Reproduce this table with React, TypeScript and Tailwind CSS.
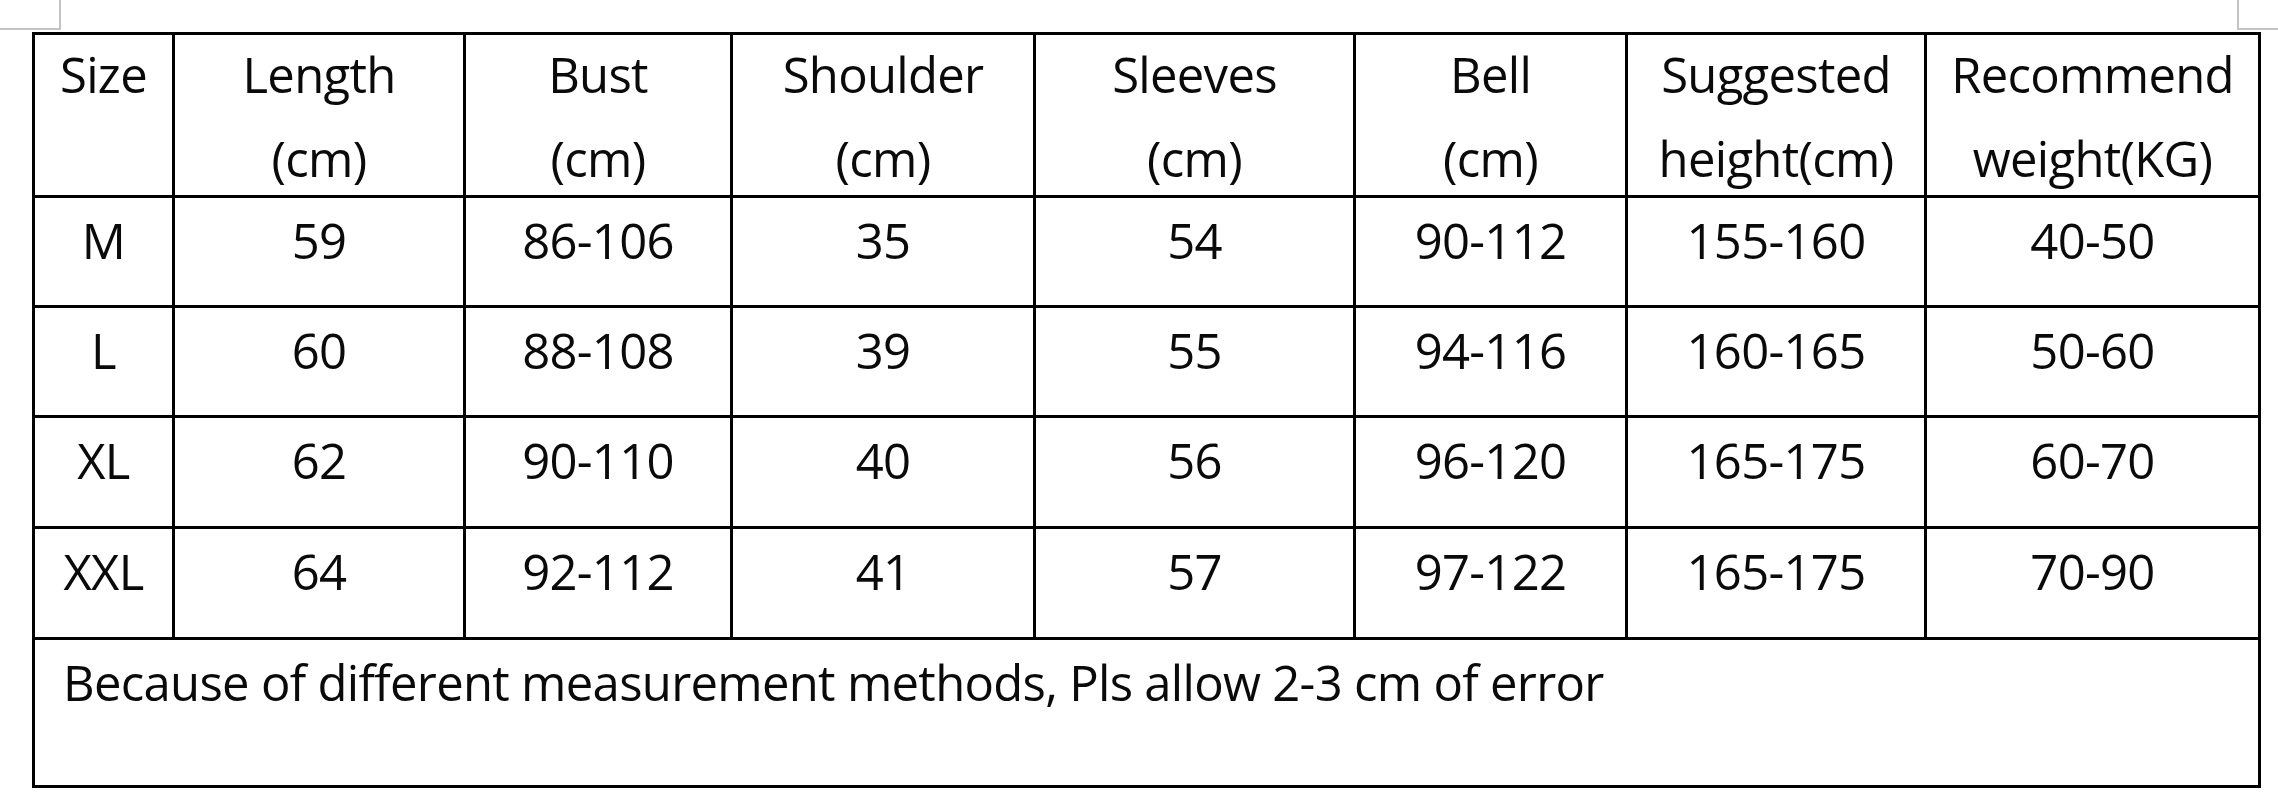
const headers: string[][] = [
  ['Size'],
  ['Length', '(cm)'],
  ['Bust', '(cm)'],
  ['Shoulder', '(cm)'],
  ['Sleeves', '(cm)'],
  ['Bell', '(cm)'],
  ['Suggested', 'height(cm)'],
  ['Recommend', 'weight(KG)'],
]

const rows: string[][] = [
  ['M', '59', '86-106', '35', '54', '90-112', '155-160', '40-50'],
  ['L', '60', '88-108', '39', '55', '94-116', '160-165', '50-60'],
  ['XL', '62', '90-110', '40', '56', '96-120', '165-175', '60-70'],
  ['XXL', '64', '92-112', '41', '57', '97-122', '165-175', '70-90'],
]

export default function App() {
  return (
    <div
      className="relative w-[2278px] h-[800px] bg-white text-[#0a0a0a] overflow-hidden"
      style={{ fontFamily: '"Open Sans", "Noto Sans", sans-serif' }}
    >
      {/* page margin marks */}
      <div className="absolute left-0 top-0 w-[61px] h-[30px] border-r-2 border-b-2 border-[#c4c4c4]" />
      <div className="absolute right-0 top-0 w-[41px] h-[30px] border-l-2 border-b-2 border-[#c4c4c4]" />

      <div className="pt-[32px] pl-[32px]">
        <div className="inline-grid grid-cols-[137px_288px_264px_300px_317px_269px_296px_331px] grid-rows-[160px_107px_107px_108px_108px_145px] gap-[3px] p-[3px] bg-black text-[49px] leading-[84px] tracking-[-0.7px]">
          {headers.map((h, i) => (
            <div key={i} className="bg-white flex flex-col items-center">
              <div className="-mt-[3px] flex flex-col items-center">
                {h.map((line, j) => (
                  <span key={j} className="whitespace-nowrap">{line}</span>
                ))}
              </div>
            </div>
          ))}
          {rows.map((r, i) =>
            r.map((cell, j) => (
              <div key={`${i}-${j}`} className="bg-white text-center whitespace-nowrap">
                {cell}
              </div>
            ))
          )}
          <div className="col-span-8 bg-white pl-[28px] whitespace-nowrap">
            Because of different measurement methods, Pls allow 2-3 cm of error
          </div>
        </div>
      </div>
    </div>
  )
}
